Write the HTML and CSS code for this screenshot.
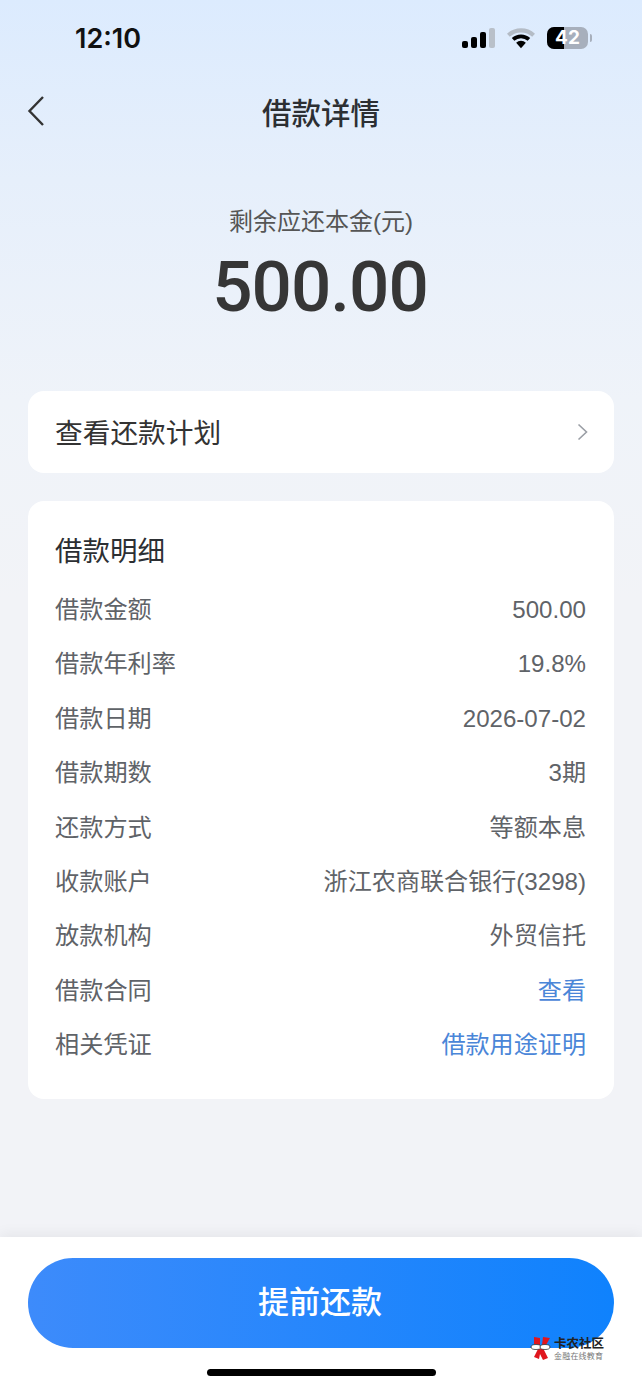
FILE: index.html
```html
<!DOCTYPE html>
<html lang="zh-CN">
<head>
  <meta charset="UTF-8">
  <meta name="viewport" content="width=device-width, initial-scale=1">
  <title>借款详情</title>
  <link rel="stylesheet" href="styles.css">
</head>
<body>
  <div class="page">
    <div class="statusbar">
      <span class="time">12:10</span>
      <div class="status-icons">
        <svg class="signal" width="33" height="20" viewBox="0 0 33 20">
          <rect x="0" y="13" width="6" height="7" rx="2" fill="#000"/>
          <rect x="9" y="9" width="6" height="11" rx="2" fill="#000"/>
          <rect x="18" y="4" width="6" height="16" rx="2" fill="#000"/>
          <rect x="27" y="0" width="6" height="20" rx="2" fill="#b9c0c9"/>
        </svg>
        <svg class="wifi" width="28" height="21" viewBox="0 0 30 22">
          <path d="M1.5 7.5 A20 20 0 0 1 28.5 7.5" fill="none" stroke="#b4bcc6" stroke-width="4.4"/>
          <path d="M6.5 12 A12.5 12.5 0 0 1 23.5 12" fill="none" stroke="#000" stroke-width="4"/>
          <path d="M15 21.5 L9.8 15.6 A7.5 7.5 0 0 1 20.2 15.6 Z" fill="#000"/>
        </svg>
        <div class="battery">
          <div class="battery-body"><span class="battery-fill"></span><span class="battery-num">42</span></div>
          <span class="battery-cap"></span>
        </div>
      </div>
    </div>

    <header class="navbar">
      <svg class="back" width="18" height="32" viewBox="0 0 18 32">
        <path d="M16 2 L2.5 16 L16 30" fill="none" stroke="#333" stroke-width="2.4"/>
      </svg>
      <h1>借款详情</h1>
    </header>

    <section class="summary">
      <p class="summary-label">剩余应还本金(元)</p>
      <p class="summary-amount">500.00</p>
    </section>

    <a class="card plan">
      <span>查看还款计划</span>
      <svg width="11" height="18" viewBox="0 0 11 18">
        <path d="M1.5 1.5 L9.5 9 L1.5 16.5" fill="none" stroke="#9a9ea5" stroke-width="1.6"/>
      </svg>
    </a>

    <section class="card detail">
      <h2>借款明细</h2>
      <div class="row"><span>借款金额</span><span class="val">500.00</span></div>
      <div class="row"><span>借款年利率</span><span class="val">19.8%</span></div>
      <div class="row"><span>借款日期</span><span class="val">2026-07-02</span></div>
      <div class="row"><span>借款期数</span><span class="val">3期</span></div>
      <div class="row"><span>还款方式</span><span class="val">等额本息</span></div>
      <div class="row"><span>收款账户</span><span class="val">浙江农商联合银行(3298)</span></div>
      <div class="row"><span>放款机构</span><span class="val">外贸信托</span></div>
      <div class="row"><span>借款合同</span><span class="val link">查看</span></div>
      <div class="row"><span>相关凭证</span><span class="val link">借款用途证明</span></div>
    </section>

    <footer class="bottom">
      <button class="repay">提前还款</button>
      <div class="home-bar"></div>
    </footer>

    <div class="watermark">
      <svg width="22" height="24" viewBox="0 0 22 24">
        <path d="M4 1 L10 2 L10 9 L4 8 Z M13 1 L20 2 L16 9 L12 9 Z M8 13 L13 12 L18 22 L13 24 L10 18 L9 23 L4 21 Z" fill="#e0161e"/>
        <ellipse cx="6" cy="11" rx="5" ry="2.5" fill="#fff" stroke="#333" stroke-width="0.8"/>
        <ellipse cx="15" cy="11" rx="5" ry="2.5" fill="#fff" stroke="#333" stroke-width="0.8"/>
      </svg>
      <div class="watermark-text">
        <span class="wm-name">卡农社区</span>
        <span class="wm-sub">金融在线教育</span>
      </div>
    </div>
  </div>
</body>
</html>
```

FILE: styles.css
```css
* {
  box-sizing: border-box;
}

body {
  margin: 0;
  font-family: "Liberation Sans", "Noto Sans CJK SC", sans-serif;
  color: #333;
}

.page {
  position: relative;
  width: 642px;
  height: 1389px;
  overflow: hidden;
  display: flex;
  flex-direction: column;
  background: linear-gradient(180deg, #dcebfe 0, #e6effb 180px, #eff3f9 400px, #f2f3f7 600px);
}

.statusbar {
  height: 76px;
  padding: 21px 50px 0 75px;
  display: flex;
  justify-content: space-between;
  align-items: flex-start;
}

.time {
  font-family: Inter, "Liberation Sans", sans-serif;
  font-size: 27px;
  font-weight: 600;
  line-height: 32px;
  margin-top: 2px;
  color: #111;
}

.status-icons {
  display: flex;
  align-items: center;
  gap: 12px;
  height: 34px;
}

.battery {
  display: flex;
  align-items: center;
  gap: 2px;
}

.battery-body {
  position: relative;
  width: 41px;
  height: 22px;
  border-radius: 7px;
  background: #a7afbc;
  overflow: hidden;
}

.battery-fill {
  position: absolute;
  left: 0;
  top: 0;
  bottom: 0;
  width: 17px;
  background: #000;
}

.battery-num {
  position: absolute;
  left: 0;
  right: 0;
  top: 0;
  text-align: center;
  font-family: Inter, "Liberation Sans", sans-serif;
  font-size: 19px;
  font-weight: 700;
  line-height: 22px;
  color: #fff;
}

.battery-cap {
  width: 2px;
  height: 8px;
  border-radius: 0 2px 2px 0;
  background: #a7afbc;
}

.navbar {
  position: relative;
  height: 74px;
  padding-top: 2px;
  display: flex;
  align-items: center;
  justify-content: center;
}

.back {
  position: absolute;
  left: 27px;
  top: 19px;
}

.navbar h1 {
  margin: 0;
  font-size: 29.5px;
  font-weight: 500;
  line-height: 72px;
  color: #2c2f33;
}

.summary {
  height: 241px;
  padding-top: 47px;
  text-align: center;
}

.summary-label {
  margin: 0;
  font-size: 24px;
  line-height: 50px;
  color: #555;
}

.summary-amount {
  margin: 0 2px 0 0;
  font-family: Roboto, "Noto Sans", sans-serif;
  font-size: 71px;
  font-weight: 500;
  line-height: 80px;
  letter-spacing: -1px;
  color: #363636;
}

.card {
  margin: 0 28px;
  background: #fff;
  border-radius: 16px;
}

.plan {
  height: 82px;
  padding: 0 26px 2px 27px;
  display: flex;
  align-items: center;
  justify-content: space-between;
  font-size: 27.7px;
  color: #333;
}

.plan svg {
  margin-top: 2px;
}

.detail {
  margin-top: 28px;
  height: 598px;
  padding: 29px 28px 0 27px;
}

.detail h2 {
  margin: 0 0 9px;
  font-size: 27.5px;
  font-weight: 400;
  line-height: 44px;
  color: #2c2f33;
}

.row {
  height: 54.4px;
  display: flex;
  align-items: baseline;
  justify-content: space-between;
  font-size: 24.2px;
  line-height: 54px;
  color: #5f6368;
}

.val {
  font-size: 24.1px;
}

.link {
  color: #4a86d8;
}

.bottom {
  position: absolute;
  left: 0;
  right: 0;
  bottom: 0;
  height: 152px;
  padding: 21px 28px 0;
  background: #fff;
  box-shadow: 0 -4px 12px rgba(0, 0, 0, 0.05);
}

.repay {
  display: block;
  width: 100%;
  height: 90px;
  padding: 0 2px 8px 0;
  border: none;
  border-radius: 45px;
  background: linear-gradient(90deg, #3d8bfb, #0f82fd);
  color: #fff;
  font-family: inherit;
  font-size: 31px;
  font-weight: 500;
}

.home-bar {
  width: 229px;
  height: 7px;
  margin: 21px auto 0;
  border-radius: 4px;
  background: #000;
}

.watermark {
  position: absolute;
  left: 530px;
  top: 1335px;
  display: flex;
  align-items: center;
  gap: 2px;
}

.watermark-text {
  display: flex;
  flex-direction: column;
  gap: 3px;
  padding-top: 3px;
}

.wm-name {
  font-size: 12.5px;
  font-weight: 700;
  line-height: 12px;
  color: #222;
}

.wm-sub {
  font-size: 8px;
  line-height: 8px;
  letter-spacing: 0.2px;
  color: #777;
}
```
